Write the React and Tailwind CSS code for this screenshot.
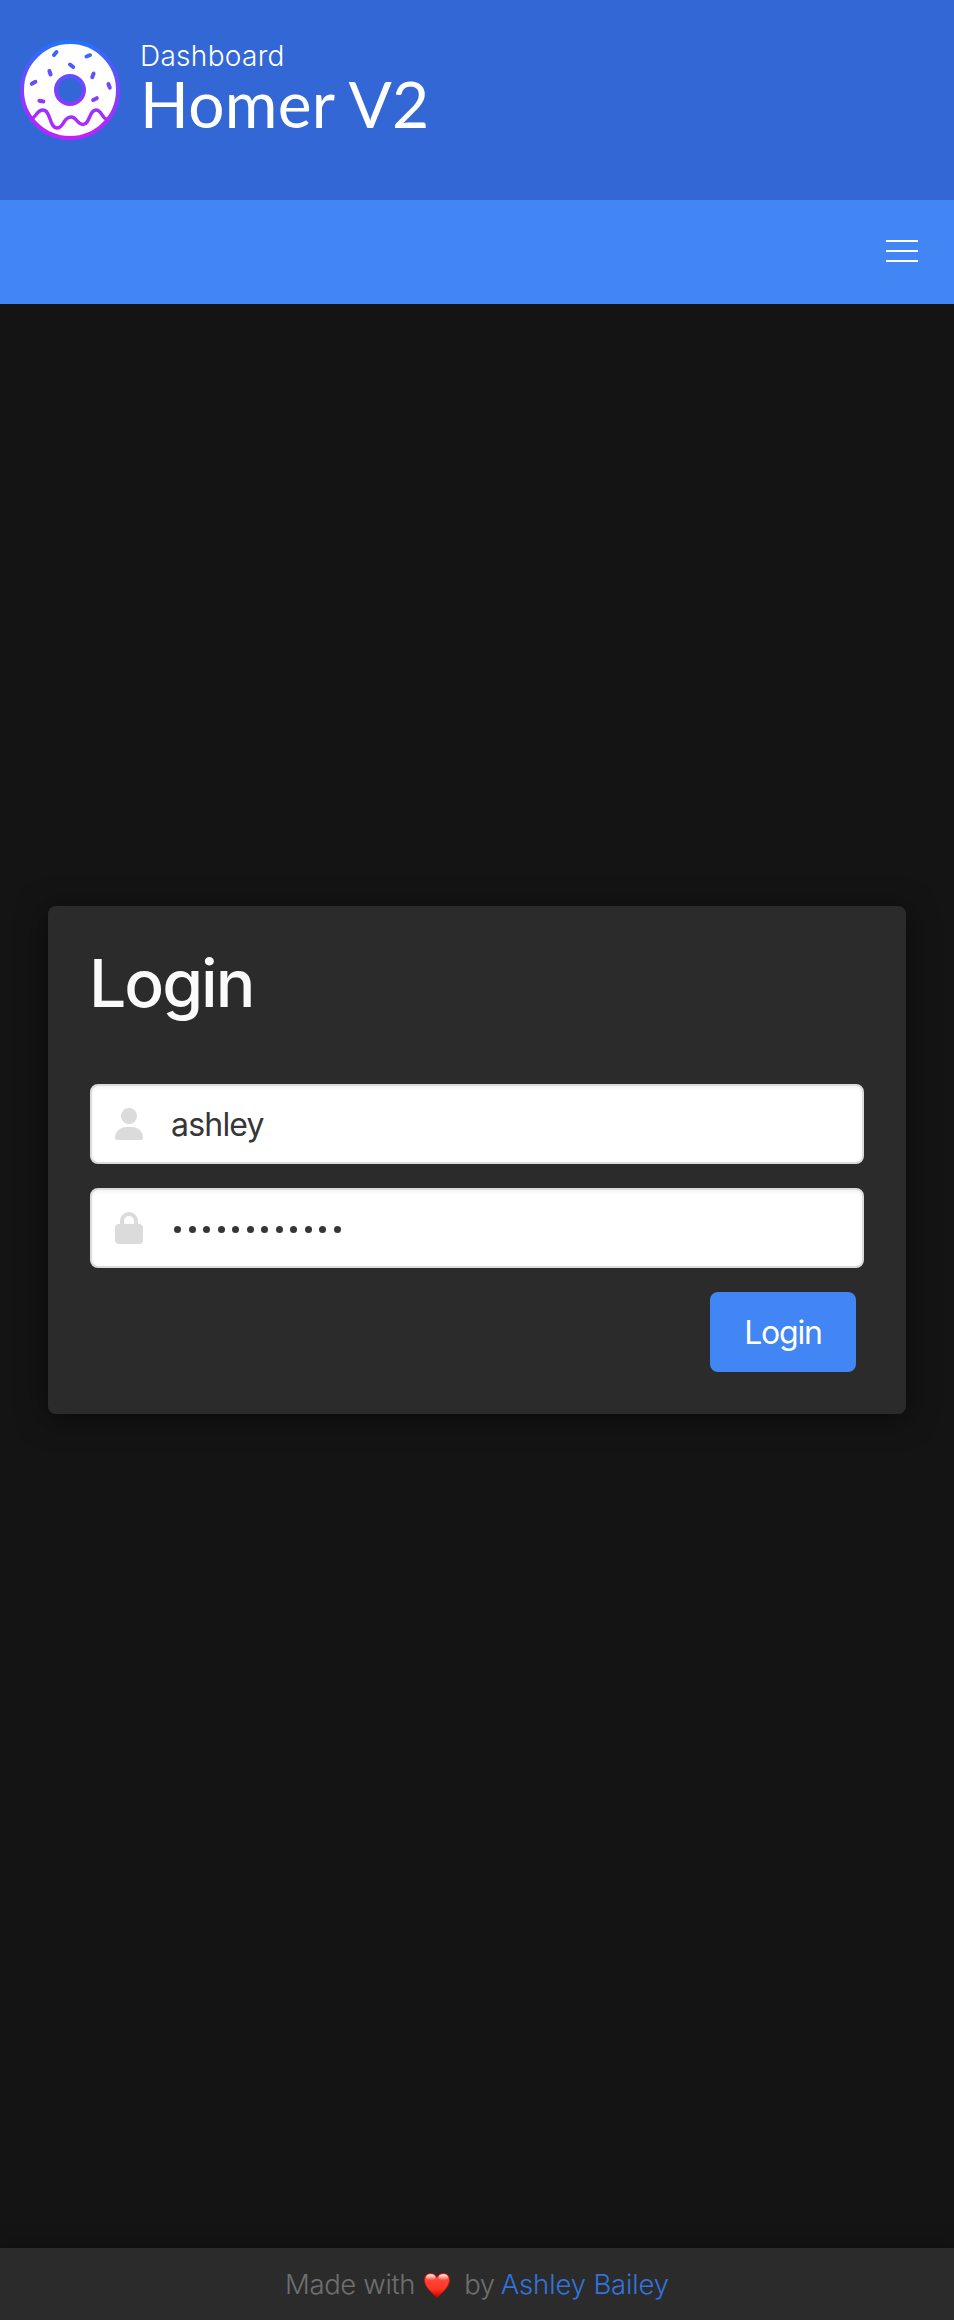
function DonutLogo() {
  return (
    <svg className="h-[100px] w-[100px] shrink-0" viewBox="0 0 100 100" fill="none">
      <defs>
        <linearGradient id="donut" x1="0" y1="0" x2="0" y2="100" gradientUnits="userSpaceOnUse">
          <stop offset="0" stopColor="#1f75ff" />
          <stop offset="0.5" stopColor="#7a42ff" />
          <stop offset="1" stopColor="#c81cff" />
        </linearGradient>
      </defs>
      <path
        fillRule="evenodd"
        fill="#fff"
        d="M50 2a48 48 0 1 0 0 96a48 48 0 1 0 0-96ZM50 35a15 15 0 1 1 0 30a15 15 0 1 1 0-30Z"
      />
      <g stroke="url(#donut)" strokeLinecap="round" strokeLinejoin="round">
        <circle cx="50" cy="50" r="48" strokeWidth="4" />
        <circle cx="50" cy="50" r="14" strokeWidth="4" />
        <path
          strokeWidth="3.4"
          d="M12 78.500C16 77 17 70 23 70C31 70 29 88 37 88C44 88 43 77 51 77C57 77 57 84.500 63 84.500C70 84.500 69 70 76 70C82 70 82 79 87 79"
        />
        <path
          strokeWidth="4"
          d="M34 15L36.500 12M66.500 16.500L70 15.200M50 24.500L53.200 27M29.400 31L30.600 34.500M73.600 33.600L72.200 37.200M11.800 43.800L15.400 41.800M88.400 44L89.800 47.600M19.400 60.800L23.400 61.400M73.200 60L76.800 58.200"
        />
      </g>
    </svg>
  );
}

function UserIcon() {
  return (
    <svg className="h-8 w-7" viewBox="0 0 28 32" fill="#dbdbdb">
      <circle cx="14" cy="8" r="8" />
      <path d="M0 30C0 23 5.500 19 11 19H17C22.500 19 28 23 28 30Q28 32 26 32H2Q0 32 0 30Z" />
    </svg>
  );
}

function LockIcon() {
  return (
    <svg className="h-8 w-7" viewBox="0 0 28 32" fill="#dbdbdb">
      <path
        fillRule="evenodd"
        d="M5 12V9a9 9 0 0 1 18 0V12H24a4 4 0 0 1 4 4V28a4 4 0 0 1-4 4H4a4 4 0 0 1-4-4V16a4 4 0 0 1 4-4ZM9 12H19V9A5 5 0 0 0 9 9Z"
      />
    </svg>
  );
}

function Heart() {
  return (
    <svg className="mr-[14px] ml-[9px] h-[25px] w-[26px]" viewBox="0 0 26 25">
      <defs>
        <linearGradient id="heart" x1="0" y1="0" x2="0" y2="1">
          <stop offset="0" stopColor="#ff6a60" />
          <stop offset="0.3" stopColor="#ff4536" />
          <stop offset="0.65" stopColor="#ff3524" />
          <stop offset="1" stopColor="#c90000" />
        </linearGradient>
        <linearGradient id="shine" x1="0" y1="0" x2="0" y2="1">
          <stop offset="0" stopColor="#fff" stopOpacity="0.9" />
          <stop offset="1" stopColor="#fff" stopOpacity="0" />
        </linearGradient>
      </defs>
      <path
        d="M13 4.500C11 1.200 9 .5 6.500 .5C3 .5 .5 3.200 .5 7C.5 14 8 20 13 24.500C18 20 25.500 14 25.500 7C25.500 3.200 23 .5 19.500 .5C17 .5 15 1.200 13 4.500Z"
        fill="url(#heart)"
        stroke="#d30b00"
        strokeWidth=".7"
      />
      <ellipse cx="6.700" cy="4.200" rx="4.600" ry="3" fill="url(#shine)" />
      <ellipse cx="19.300" cy="4.200" rx="4.600" ry="3" fill="url(#shine)" />
    </svg>
  );
}

function Field({ icon, children }) {
  return (
    <div className="flex h-20 items-center rounded-lg border-2 border-[#dbdbdb] bg-white pl-[23px] text-[#363636] shadow-[inset_0_2px_4px_rgba(10,10,10,0.05)]">
      {icon}
      {children}
    </div>
  );
}

export default function App() {
  return (
    <div className="flex h-[2320px] w-[954px] flex-col bg-[#141414] font-['Inter',sans-serif]">
      <header className="flex h-[200px] items-start bg-[#3367d6] pt-10 pl-5 text-white">
        <DonutLogo />
        <div className="ml-5 whitespace-nowrap">
          <div className="h-[31px] text-[28px] leading-[33px] font-light tracking-[0.3px]">Dashboard</div>
          <h1 className="font-['Lato',sans-serif] text-[64px] leading-[66px] tracking-[0.3px]">Homer V2</h1>
        </div>
      </header>
      <nav className="flex h-[104px] items-center justify-end bg-[#4285f4] pr-9 pb-0.5">
        <button className="flex w-8 flex-col gap-2" aria-label="Menu">
          <span className="h-0.5 bg-white" />
          <span className="h-0.5 bg-white" />
          <span className="h-0.5 bg-white" />
        </button>
      </nav>
      <main className="flex-1 px-12 pt-[602px]">
        <form className="flex h-[508px] flex-col rounded-lg bg-[#2b2b2b] px-[42px] pt-[37px] shadow-[0_4px_30px_rgba(0,0,0,0.5)]">
          <h2 className="mb-[61px] -ml-px h-20 text-[66px] leading-[80px] font-medium tracking-[-2px] text-[#fafafa]">
            Login
          </h2>
          <div className="flex flex-col gap-6">
            <Field icon={<UserIcon />}>
              <span className="mt-px ml-[28px] text-[32px] leading-10 tracking-[-0.8px]">ashley</span>
            </Field>
            <Field icon={<LockIcon />}>
              <span className="mt-[3px] ml-[31px] flex gap-[7.5px]">
                {Array.from({ length: 12 }, (_, i) => (
                  <span key={i} className="h-[7px] w-[7px] rounded-full bg-[#363636]" />
                ))}
              </span>
            </Field>
            <button className="mr-2 flex h-20 w-[146px] items-center justify-center self-end rounded-lg bg-[#4285f4] pt-0.5 text-[32px] tracking-[-1.2px] text-white">
              Login
            </button>
          </div>
        </form>
      </main>
      <footer className="flex h-[72px] items-center justify-center bg-[#2b2b2b] pt-0.5 text-[27.5px] font-light whitespace-nowrap text-[#6f6f6f] shadow-[0_0_20px_rgba(0,0,0,0.35)]">
        <span className="tracking-[-0.35px]">Made with</span>
        <Heart />
        <span className="mr-1.5 tracking-[-0.4px]">by</span>
        <a className="tracking-[-0.15px] text-[#3273dc]">Ashley Bailey</a>
      </footer>
    </div>
  );
}
